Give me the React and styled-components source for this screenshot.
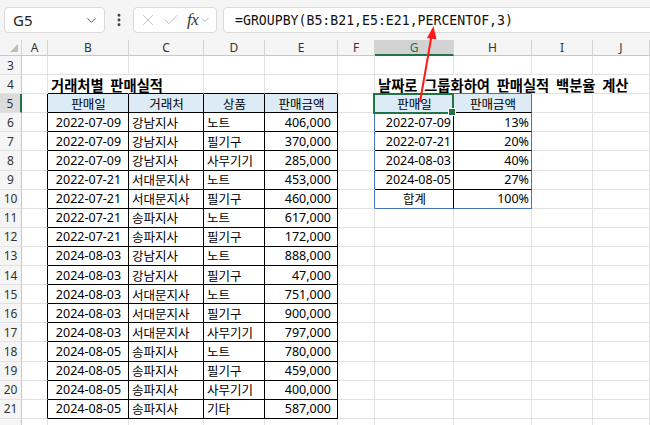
import React from 'react'
import styled, { createGlobalStyle } from 'styled-components'
import { X, Check, ChevronDown, EllipsisVertical } from 'lucide-react'

const GlobalStyle = createGlobalStyle`
  * { box-sizing: border-box; }
  html, body { margin: 0; padding: 0; background: #fff; }
  body {
    font-family: "Noto Sans", "Noto Sans CJK KR", sans-serif;
    overflow: hidden;
  }
`

const GRID = '#e1e1e1'
const BLACK = '#000'
const BLUE = '#4472c4'
const GREEN = '#217346'
const HEAD_BG = '#ddebf7'

/*-----------------------------------------------------------------------------
  Frame
------------------------------------------------------------------------------*/
const Frame = styled.div`
  position: relative;
  width: 650px;
  height: 425px;
  overflow: hidden;
  background: #fff;
`

/*-----------------------------------------------------------------------------
  Formula bar
------------------------------------------------------------------------------*/
const Toolbar = styled.div`
  height: 40px;
  display: flex;
  align-items: center;
  padding: 0 0 0 4px;
  gap: 6px;
  background: #f5f5f5;
`

const NameBox = styled.div`
  width: 101px;
  height: 26px;
  display: flex;
  align-items: center;
  justify-content: space-between;
  padding: 0 5px 0 8px;
  background: #fff;
  border: 1px solid #dadada;
  border-radius: 4px;
  font-size: 15px;
  color: #222;
`

const Dots = styled.div`
  width: 16px;
  display: flex;
  justify-content: center;
  color: #444;
`

const FuncBox = styled.div`
  width: 84px;
  height: 26px;
  display: flex;
  align-items: center;
  padding: 0 0 0 5px;
  gap: 5px;
  background: #fff;
  border: 1px solid #dadada;
  border-radius: 4px;
  color: #b8b8b8;
`

const Fx = styled.span`
  margin-left: 2px;
  font-family: "Liberation Serif", serif;
  font-style: italic;
  font-size: 17px;
  color: #333;
  letter-spacing: -0.5px;
`

const FormulaBox = styled.div`
  flex: 1;
  height: 26px;
  margin-right: -10px;
  display: flex;
  align-items: center;
  padding-left: 11px;
  background: #fff;
  border: 1px solid #dadada;
  border-radius: 4px;
  font-family: "DejaVu Sans Mono", monospace;
  font-size: 13.2px;
  color: #111;
`

/*-----------------------------------------------------------------------------
  Sheet grid
------------------------------------------------------------------------------*/
const Sheet = styled.div`
  display: grid;
  grid-template-columns: 22px 26px 81px 75px 61px 73px 37px 79px 78px 61px 1fr;
  grid-template-rows: 16px;
  grid-auto-rows: 19.1px;
  height: 385px;
  overflow: hidden;
`

const ColHead = styled.div`
  display: flex;
  align-items: center;
  justify-content: center;
  background: ${({ $active }) => ($active ? '#d2d2d2' : '#f5f5f5')};
  border-right: 1px solid #d4d4d4;
  border-bottom: ${({ $active }) => ($active ? `2px solid ${GREEN}` : '1px solid #c8c8c8')};
  font-size: 12px;
  color: ${({ $active }) => ($active ? GREEN : '#333')};
`

const Corner = styled(ColHead)`
  position: relative;
  &::after {
    content: '';
    position: absolute;
    right: 3px;
    bottom: 3px;
    border-style: solid;
    border-width: 0 0 8px 8px;
    border-color: transparent transparent #bdbdbd transparent;
  }
`

const RowHead = styled.div`
  display: flex;
  align-items: center;
  justify-content: center;
  background: ${({ $active }) => ($active ? '#dcdcdc' : '#f5f5f5')};
  border-right: ${({ $active }) => ($active ? `2px solid ${GREEN}` : '1px solid #c8c8c8')};
  border-bottom: 1px solid #e3e3e3;
  font-size: 12px;
  color: #333;
`

const Cell = styled.div`
  position: relative;
  display: flex;
  align-items: center;
  justify-content: ${({ $align }) =>
    $align === 'right' ? 'flex-end' : $align === 'center' ? 'center' : 'flex-start'};
  padding: 0 ${({ $pr }) => $pr}px 0 3px;
  white-space: nowrap;
  overflow: visible;
  background: ${({ $bg }) => $bg || 'transparent'};
  border-right: 1px solid ${({ $right }) => $right};
  border-bottom: 1px solid ${({ $bottom }) => $bottom};
  font-size: ${({ $title }) => ($title ? '14.3px' : '12.5px')};
  font-weight: ${({ $title }) => ($title ? 700 : 400)};
  word-spacing: ${({ $title }) => ($title ? '3px' : 'normal')};
  color: #000;
`

const Selection = styled.div`
  position: absolute;
  left: -2px;
  top: -1px;
  right: -1px;
  bottom: -2px;
  border: 2px solid ${GREEN};
  z-index: 3;
  &::after {
    content: '';
    position: absolute;
    right: -4px;
    bottom: -4px;
    width: 6px;
    height: 6px;
    background: ${GREEN};
    border: 1px solid #fff;
  }
`

const Arrow = styled.svg`
  position: absolute;
  left: 0;
  top: 0;
  z-index: 5;
  pointer-events: none;
`

/*-----------------------------------------------------------------------------
  Data
------------------------------------------------------------------------------*/
const sales = [
  ['2022-07-09', '강남지사', '노트', '406,000'],
  ['2022-07-09', '강남지사', '필기구', '370,000'],
  ['2022-07-09', '강남지사', '사무기기', '285,000'],
  ['2022-07-21', '서대문지사', '노트', '453,000'],
  ['2022-07-21', '서대문지사', '필기구', '460,000'],
  ['2022-07-21', '송파지사', '노트', '617,000'],
  ['2022-07-21', '송파지사', '필기구', '172,000'],
  ['2024-08-03', '강남지사', '노트', '888,000'],
  ['2024-08-03', '강남지사', '필기구', '47,000'],
  ['2024-08-03', '서대문지사', '노트', '751,000'],
  ['2024-08-03', '서대문지사', '필기구', '900,000'],
  ['2024-08-03', '서대문지사', '사무기기', '797,000'],
  ['2024-08-05', '송파지사', '노트', '780,000'],
  ['2024-08-05', '송파지사', '필기구', '459,000'],
  ['2024-08-05', '송파지사', '사무기기', '400,000'],
  ['2024-08-05', '송파지사', '기타', '587,000'],
]

const summary = [
  ['2022-07-09', '13%'],
  ['2022-07-21', '20%'],
  ['2024-08-03', '40%'],
  ['2024-08-05', '27%'],
  ['합계', '100%'],
]

const letters = ['A', 'B', 'C', 'D', 'E', 'F', 'G', 'H', 'I', 'J']
const rows = Array.from({ length: 20 }, (_, i) => i + 3)

const inLeft = (r, c) => r >= 5 && r <= 21 && c >= 1 && c <= 4
const inRight = (r, c) => r >= 5 && r <= 10 && c >= 6 && c <= 7

function rightColor(r, c) {
  if (r === 4 && [1, 6, 7, 8].includes(c)) return 'transparent'
  if (inLeft(r, c) || inLeft(r, c + 1)) return BLACK
  if (inRight(r, c)) return c === 7 ? BLUE : BLACK
  if (inRight(r, c + 1)) return BLUE
  return GRID
}

function bottomColor(r, c) {
  if (inLeft(r, c) || inLeft(r + 1, c)) return BLACK
  if (inRight(r, c)) return r === 10 ? BLUE : BLACK
  if (inRight(r + 1, c)) return BLUE
  return GRID
}

function cellContent(r, c) {
  if (r === 4 && c === 1) return { text: '거래처별 판매실적', title: true }
  if (r === 4 && c === 6) return { text: '날짜로 그룹화하여 판매실적 백분율 계산', title: true }
  if (r === 5 && c >= 1 && c <= 4) {
    return { text: ['판매일', '거래처', '상품', '판매금액'][c - 1], align: 'center', bg: HEAD_BG }
  }
  if (r === 5 && (c === 6 || c === 7)) {
    return { text: c === 6 ? '판매일' : '판매금액', align: 'center', bg: HEAD_BG }
  }
  if (inLeft(r, c)) {
    const v = sales[r - 6][c - 1]
    if (c === 1) return { text: v, align: 'center' }
    if (c === 4) return { text: v, align: 'right', pr: 6 }
    return { text: v }
  }
  if (inRight(r, c)) {
    const [d, p] = summary[r - 6]
    if (c === 6) return { text: d, align: d === '합계' ? 'center' : 'right' }
    return { text: p, align: 'right' }
  }
  return { text: '' }
}

export default function App() {
  return (
    <Frame>
      <GlobalStyle />
      <Toolbar>
        <NameBox>
          G5
          <ChevronDown size={15} strokeWidth={1.6} color="#555" />
        </NameBox>
        <Dots>
          <EllipsisVertical size={16} strokeWidth={2.4} />
        </Dots>
        <FuncBox>
          <X size={18} strokeWidth={1.2} />
          <Check size={18} strokeWidth={1.2} />
          <Fx>fx</Fx>
          <ChevronDown size={12} strokeWidth={1.4} color="#888" style={{ marginLeft: -4 }} />
        </FuncBox>
        <FormulaBox>=GROUPBY(B5:B21,E5:E21,PERCENTOF,3)</FormulaBox>
      </Toolbar>

      <Sheet>
        <Corner />
        {letters.map((l) => (
          <ColHead key={l} $active={l === 'G'}>{l}</ColHead>
        ))}
        {rows.map((r) => (
          <React.Fragment key={r}>
            <RowHead $active={r === 5}>{r <= 21 ? r : ''}</RowHead>
            {letters.map((l, c) => {
              const info = cellContent(r, c)
              return (
                <Cell
                  key={l}
                  $right={rightColor(r, c)}
                  $bottom={bottomColor(r, c)}
                  $bg={info.bg}
                  $align={info.align}
                  $pr={info.pr ?? 2}
                  $title={info.title}
                >
                  {info.text}
                  {r === 5 && c === 6 && <Selection />}
                </Cell>
              )
            })}
          </React.Fragment>
        ))}
      </Sheet>

      <Arrow width="650" height="425" viewBox="0 0 650 425">
        <line x1="420" y1="102" x2="431.5" y2="36" stroke="#ff1a1a" strokeWidth="2" />
        <polygon points="433.5,26 427,38 436.5,39.5" fill="#ff1a1a" />
      </Arrow>
    </Frame>
  )
}
